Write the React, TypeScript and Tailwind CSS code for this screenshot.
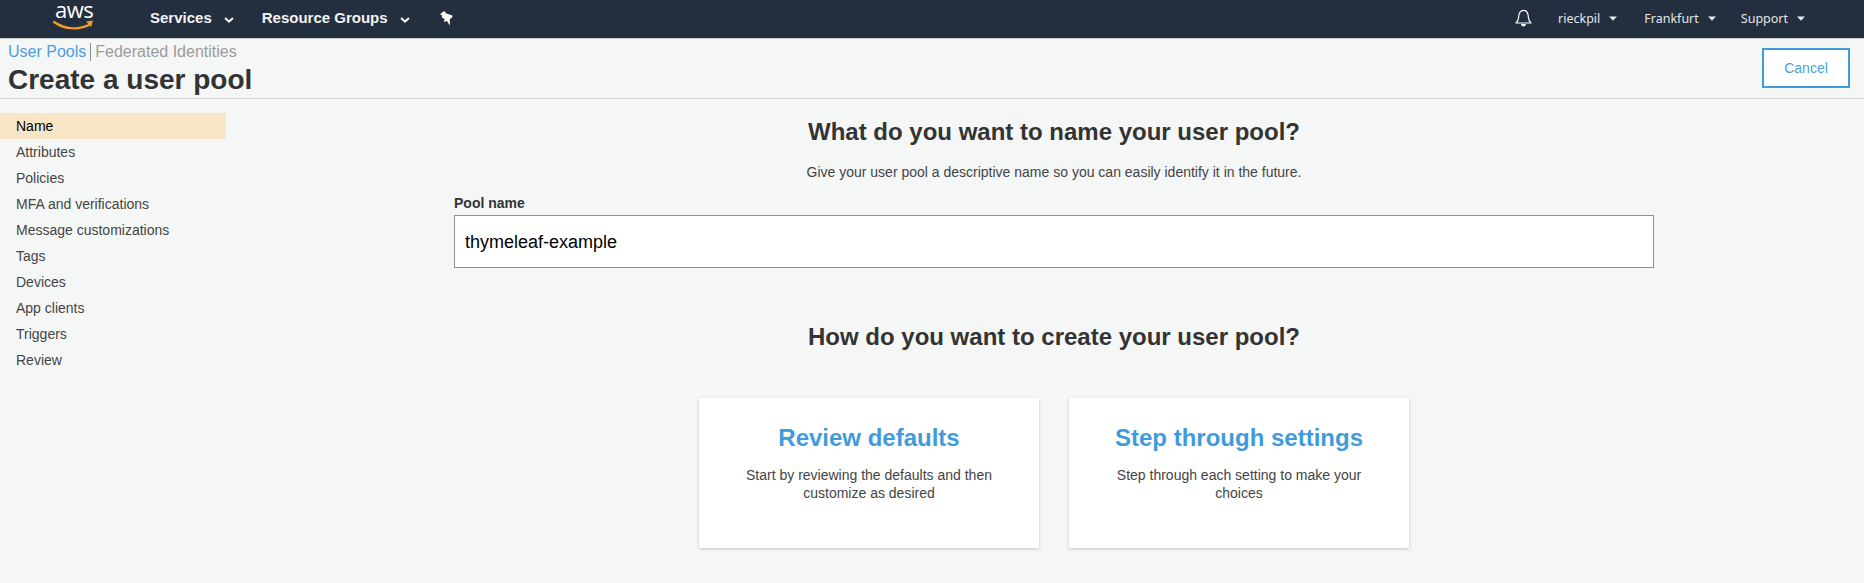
import React from "react";

const steps = ["Name","Attributes","Policies","MFA and verifications","Message customizations","Tags","Devices","App clients","Triggers","Review"];

function Caret() {
  return <svg width="8" height="5" viewBox="0 0 8 5" className="ml-[9px] mt-[-2px]"><path d="M0 0.5h8L4 4.8z" fill="#e9ebed" /></svg>;
}

function Chevron() {
  return (
    <svg width="10" height="6" viewBox="0 0 10 6" className="mt-[3px]">
      <path d="M1 1l4 3.6L9 1" fill="none" stroke="#f2f3f3" strokeWidth="2" />
    </svg>
  );
}

function Card({ title, desc }: { title: string; desc: string }) {
  return (
    <div className="w-[340px] h-[150px] bg-white shadow-[0_1px_3px_rgba(0,0,0,0.2)] text-center pt-[25px] px-[40px]">
      <div className="text-[24px] leading-[30px] font-bold text-[#419bdb]">{title}</div>
      <p className="mt-[13px] text-[14px] leading-[18px] text-[#444]">{desc}</p>
    </div>
  );
}

export default function App() {
  return (
    <div className="h-[583px] overflow-hidden bg-[#f5f7f7] text-[#333] font-['Liberation_Sans',Arial,sans-serif]">
      <header className="h-[39px] bg-[#232f3e] flex items-center border-b border-[#c8cccc]">
        <div className="relative w-[150px] h-full shrink-0">
          <span className="absolute left-[55px] top-0 text-[22px] leading-[18px] tracking-[-0.5px] text-white font-['Open_Sans',sans-serif]">aws</span>
          <svg width="42" height="12" viewBox="0 0 42 12" className="absolute left-[53px] top-[19px]">
            <path d="M1 3c11 8 26 8 37 2" fill="none" stroke="#f79c1d" strokeWidth="2.2" strokeLinecap="round" />
            <path d="M33 2.5l7-1-2 6.5z" fill="#f79c1d" />
          </svg>
        </div>
        <div className="flex items-center text-[15px] font-bold text-[#f2f3f3] mt-[-2px]">
          <span>Services</span>
          <span className="ml-[12px]"><Chevron /></span>
          <span className="ml-[28px]">Resource Groups</span>
          <span className="ml-[12px]"><Chevron /></span>
          <svg width="13" height="15" viewBox="0 0 13 15" className="ml-[30px]">
            <path d="M0 3.2 4 0 6.4 2.4 12.4 4.6 12.2 6.6 9.8 8 10 14.6 6.8 10 4 11 4.6 8 1.8 6.4 2.2 4.6z" fill="#fff" />
          </svg>
        </div>
        <div className="ml-auto flex items-center text-[12.5px] text-[#e4e6e8] font-['Noto_Sans',sans-serif]">
          <svg width="17" height="18" viewBox="0 0 17 18" className="mr-[26px] mt-[-2px]">
            <path d="M1 14c1.6-1.5 2.4-3 2.6-5.6C3.8 5 4.6 1.4 8.5 1.4S13.2 5 13.4 8.4c.2 2.6 1 4.1 2.6 5.6z" fill="none" stroke="#fff" strokeWidth="1.2" strokeLinejoin="round" />
            <path d="M6 15h5c0 1.4-1.1 2.4-2.5 2.4S6 16.4 6 15z" fill="#fff" />
          </svg>
          <span>rieckpil</span><Caret />
          <span className="ml-[27px]">Frankfurt</span><Caret />
          <span className="ml-[25px]">Support</span><Caret />
          <span className="w-[59px]" />
        </div>
      </header>

      <div className="h-[60px] border-b border-[#cfd2d2] flex justify-between pl-[8px] pr-[14px]">
        <div>
          <div className="flex items-center h-[22px] mt-[2px] text-[16px]">
            <span className="text-[#4c9fdc]">User Pools</span>
            <span className="w-px h-[18px] bg-[#8a8a8a] mx-[4px]" />
            <span className="text-[#9b9b9b]">Federated Identities</span>
          </div>
          <h1 className="text-[28px] leading-[32px] font-bold mt-[1px]">Create a user pool</h1>
        </div>
        <button className="w-[88px] h-[40px] mt-[9px] border-2 border-[#419bdb] bg-white text-[14px] text-[#4c9fdc]">Cancel</button>
      </div>

      <div className="flex">
        <nav className="w-[226px] shrink-0 mt-[14px]">
          {steps.map((s, i) => (
            <div key={s} className={`h-[26px] leading-[26px] pl-[16px] text-[14px] ${i === 0 ? "bg-[#f8e5c6] text-black" : "text-[#444]"}`}>{s}</div>
          ))}
        </nav>
        <main className="flex-1 flex flex-col pl-[228px]">
          <h2 className="w-[1200px] text-center text-[24px] leading-[30px] font-bold mt-[18px]">What do you want to name your user pool?</h2>
          <p className="w-[1200px] text-center text-[14px] leading-[18px] mt-[16px] text-[#444]">Give your user pool a descriptive name so you can easily identify it in the future.</p>
          <label className="text-[14px] leading-[18px] font-bold mt-[13px] mb-[3px] text-[#333]">Pool name</label>
          <input readOnly value="thymeleaf-example" className="w-[1200px] h-[53px] border border-[#8c9090] bg-white px-[10px] pt-[2px] text-[18px] text-black outline-none" />
          <h2 className="w-[1200px] text-center text-[24px] leading-[30px] font-bold mt-[54px]">How do you want to create your user pool?</h2>
          <div className="w-[1200px] flex justify-center gap-[30px] mt-[46px]">
            <Card title="Review defaults" desc="Start by reviewing the defaults and then customize as desired" />
            <Card title="Step through settings" desc="Step through each setting to make your choices" />
          </div>
        </main>
      </div>
    </div>
  );
}
